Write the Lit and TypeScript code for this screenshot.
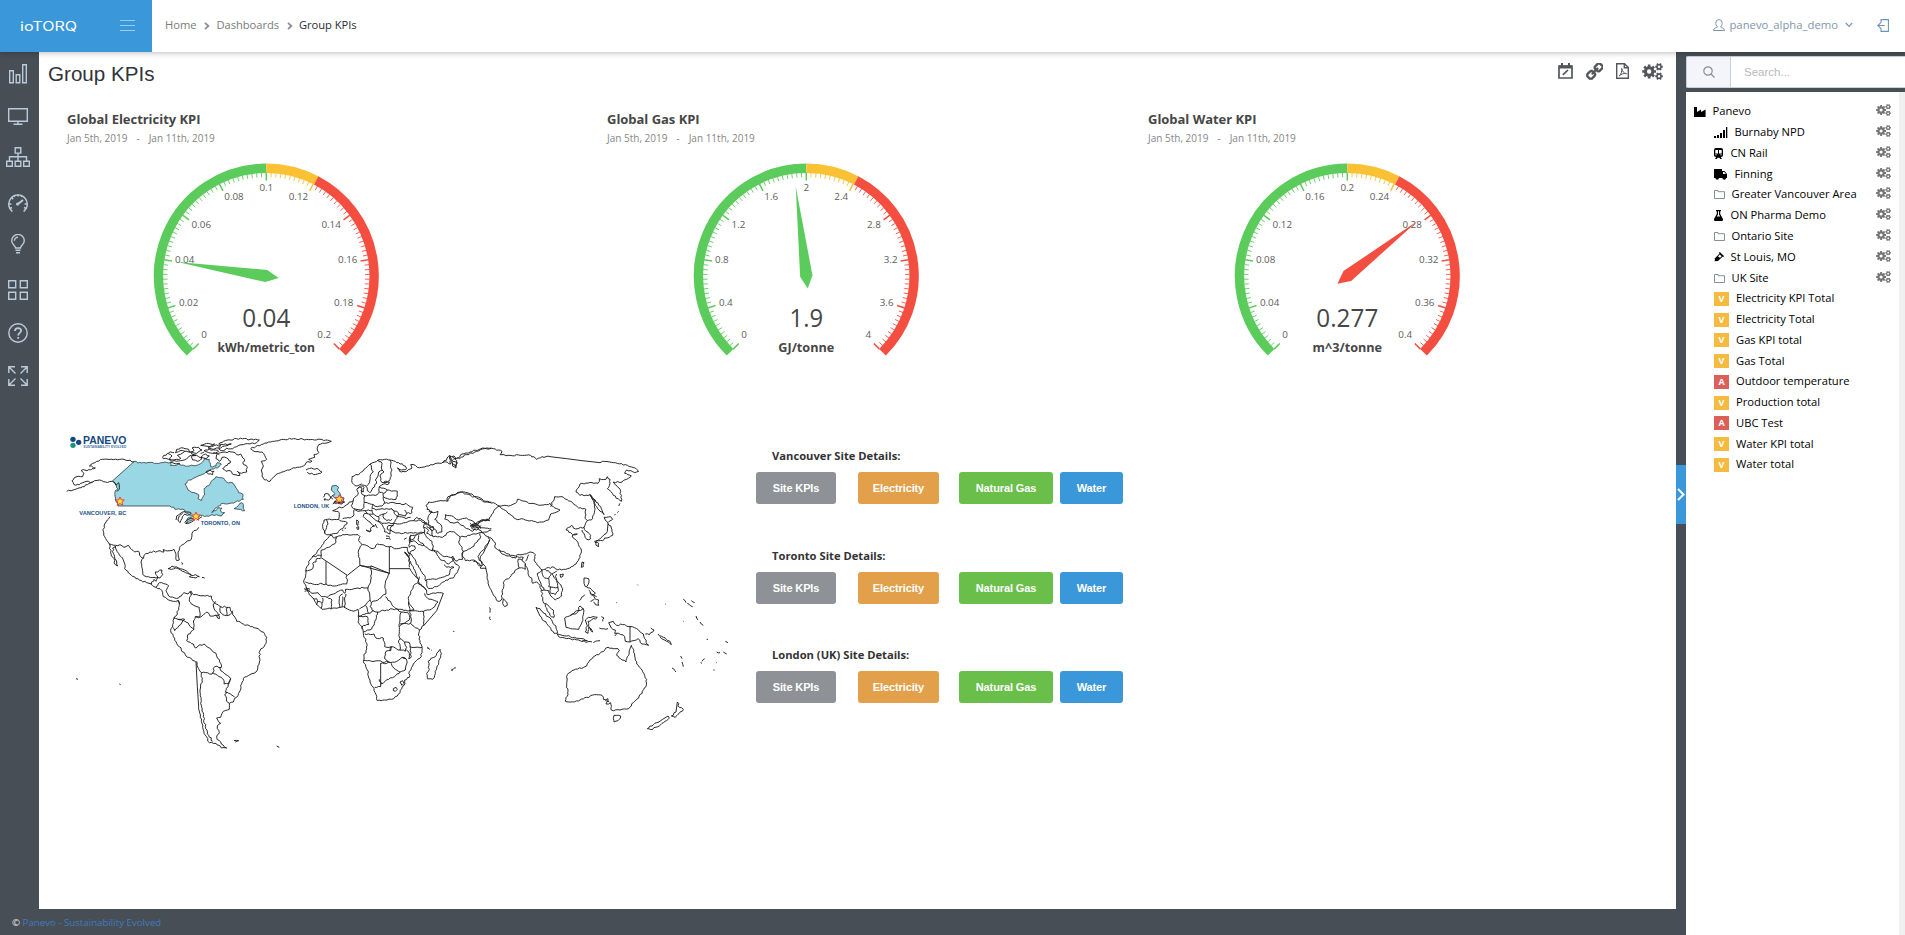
import { LitElement, html, svg, css } from "lit";
import { customElement, property } from "lit/decorators.js";

const f = (n: number) => n.toFixed(2);

function gear(cx: number, cy: number, r: number, inner: number, hole: number, teeth: number) {
  let d = "";
  const step = (Math.PI * 2) / teeth;
  for (let i = 0; i < teeth; i++) {
    const a = i * step;
    const pts: [number, number][] = [
      [a - step * 0.32, inner],
      [a - step * 0.24, r],
      [a + step * 0.24, r],
      [a + step * 0.32, inner],
    ];
    for (const [t, q] of pts) d += `${d ? "L" : "M"}${f(cx + Math.cos(t) * q)} ${f(cy + Math.sin(t) * q)}`;
  }
  return d + `ZM${cx - hole} ${cy}a${hole} ${hole} 0 1 0 ${hole * 2} 0a${hole} ${hole} 0 1 0 ${-hole * 2} 0Z`;
}
const GEARS = gear(6.8, 8, 6.7, 5, 2.1, 8) + gear(16.2, 3.6, 3.7, 2.8, 1.2, 6) + gear(16.2, 12.4, 3.7, 2.8, 1.2, 6);
const cogs = (w: number, h: number) =>
  html`<svg width=${w} height=${h} viewBox="0 0 20 16" preserveAspectRatio="none"><path d=${GEARS} fill="currentColor" fill-rule="evenodd" /></svg>`;

const LINK =
  "M1456 1216q0-40-28-68l-208-208q-28-28-68-28-42 0-72 32 3 3 19 18.5t21.5 21.5 15 19 13 25.5 3.5 27.5q0 40-28 68t-68 28q-15 0-27.5-3.5t-25.5-13-19-15-21.5-21.5-18.5-19q-33 31-33 73 0 40 28 68l206 207q27 27 68 27 40 0 68-26l147-146q28-28 28-67zm-703-705q0-40-28-68l-206-207q-28-28-68-28-39 0-68 27l-147 146q-28 28-28 67 0 40 28 68l208 208q27 27 68 27 42 0 72-31-3-3-19-18.5t-21.5-21.5-15-19-13-25.5-3.5-27.5q0-40 28-68t68-28q15 0 27.5 3.5t25.5 13 19 15 21.5 21.5 18.5 19q33-31 33-73zm895 705q0 120-85 203l-147 146q-83 83-203 83-121 0-204-85l-206-207q-83-83-83-203 0-123 88-209l-88-88q-86 88-208 88-120 0-204-84l-208-208q-84-84-84-204t85-203l147-146q83-83 203-83 121 0 204 85l206 207q83 83 83 203 0 123-88 209l88 88q86-88 208-88 120 0 204 84l208 208q84 84 84 204z";

/* ---------- gauge ---------- */
const GREEN = "#5bcc5b", YELLOW = "#fbc134", RED = "#f44e40";
const LABEL_POS: [number, number][] = [
  [-65, 58.5], [-87.4, 26.7], [-91.4, -16], [-74.7, -51], [-42, -79], [0, -88.3],
  [41.8, -79], [74.5, -51], [91.2, -16], [87.2, 26.7], [64.8, 58.5],
];

@customElement("kpi-gauge")
export class KpiGauge extends LitElement {
  @property({ type: Number }) value = 0;
  @property({ type: Number }) max = 1;
  @property() unit = "";
  @property({ type: Number }) unitWidth = 80;
  @property({ type: Number }) valueWidth = 40;
  static styles = css`
    :host { display: block; }
    svg { display: block; }
    .label { font: 9.8px "Open Sans", sans-serif; fill: #5c5c5c; }
    .value { font: 25.5px "Open Sans", sans-serif; fill: #464646; text-anchor: middle; }
    .unit { font: 700 12.6px "Open Sans", sans-serif; fill: #464646; text-anchor: middle; }
    .start { text-anchor: start; } .middle { text-anchor: middle; } .end { text-anchor: end; }
  `;
  private pt(ratio: number, r: number) {
    const a = ((225 - 270 * ratio) * Math.PI) / 180;
    return [Math.cos(a) * r, -Math.sin(a) * r];
  }
  private band(a: number, b: number, color: string) {
    const [x1, y1] = this.pt(a, 107.8), [x2, y2] = this.pt(b, 107.8);
    return svg`<path d="M${f(x1)} ${f(y1)}A107.8 107.8 0 0 1 ${f(x2)} ${f(y2)}" fill="none" stroke=${color} stroke-width="9.4"/>`;
  }
  render() {
    const color = (t: number) => (t <= 0.5 ? GREEN : t <= 0.6001 ? YELLOW : RED);
    const ticks = [];
    for (let i = 0; i <= 100; i++) {
      const major = i % 10 === 0;
      const [x1, y1] = this.pt(i / 100, 103.4), [x2, y2] = this.pt(i / 100, major ? 95.5 : 98.8);
      ticks.push(svg`<line x1=${f(x1)} y1=${f(y1)} x2=${f(x2)} y2=${f(y2)} stroke=${color(i / 100)} stroke-width=${major ? 1.5 : 0.9}/>`);
    }
    const t = this.value / this.max;
    const a = 225 - 270 * t;
    return html`<svg width="400" height="220" viewBox="-199.3 -125 400 220">
      ${this.band(0, 0.5, GREEN)}${this.band(0.5, 0.602, YELLOW)}${this.band(0.602, 1, RED)}${ticks}
      ${LABEL_POS.map(([x, y], i) => svg`<text class="label ${i < 5 ? "start" : i === 5 ? "middle" : "end"}" x=${x} y=${y + 3.4}>${+((this.max * i) / 10).toFixed(3)}</text>`)}
      <path d="M90 0L0 6.2L-12.5 0L0 -6.2Z" transform="rotate(${-a})" fill=${color(t)} />
      <text class="value" x="0" y="51" textLength=${this.valueWidth} lengthAdjust="spacingAndGlyphs">${this.value}</text>
      <text class="unit" x="0" y="76.3" textLength=${this.unitWidth} lengthAdjust="spacingAndGlyphs">${this.unit}</text>
    </svg>`;
  }
}

/* ---------- world map ---------- */
const CANADA =
  "M252 125L275 129L300 127L320 130L345 126L362 128L362 137L390 134L418 138L446 134L458 126L464 116L478 118L482 140L498 138L502 128L514 132L502 144L480 150L468 156L450 166L432 174L412 184L405 192L414 210L438 220L446 224L444 236L454 242L464 222L462 206L480 192L484 184L498 170L520 174L530 186L548 188L560 206L566 218L578 222L580 238L556 246L540 250L520 250L496 264L486 278L506 262L516 264L512 274L524 278L514 288L500 284L486 284L470 288L452 286L440 292L424 302L408 308L414 294L428 288L410 280L404 270L380 268L360 258L204 258L196 240L196 212L204 206L196 192L186 184Z M552 266L566 256L576 248L580 258L584 272L566 268Z";
const AMERICAS =
  "M252 125L222 118L190 119L158 118L140 124L118 138L136 144L122 150L94 151L102 160L98 170L78 171L66 182L72 194L88 194L108 184L128 186L112 194L98 200L76 208L50 214M128 186L148 180L166 186L186 184M190 184L198 196L206 188L208 208L200 214 M180 290L172 300L164 312L160 334L164 350L178 372L196 376L210 374L222 382L234 376L244 388L254 396L266 394L272 410L282 414M178 372L182 398L184 408L194 422L196 434L203 438L198 420L190 400L188 384L196 378L206 400L222 426L224 446L244 466L268 480L290 488L304 492L312 478L318 484L322 468L316 456L336 450L338 464L330 474L312 472L290 470L278 462L275 440L276 418L282 406L300 396L322 394L330 392L342 396L340 388L360 392L372 388L378 406L380 422L388 420L384 396L390 380L408 366L424 358L426 348L428 336L446 322 M302 492L318 502L330 506L338 518L340 530L356 540L370 544L384 542L388 550M318 500L328 488L346 492L356 498L348 512L356 528L374 534L386 534L394 528L402 518L414 522L424 514L430 524L446 526L466 528L484 528L488 542L504 554L512 560L540 562L548 584L560 604L580 612L602 620L618 624L640 636L650 652L648 670L630 692L628 726L618 756L600 764L580 776L572 796L568 816L550 846L538 850L530 844L524 824L530 816L542 822L554 832M538 850L538 868L520 874L512 892L500 894L512 910L502 918L508 938L500 952L514 972L530 984L514 984L498 970L478 968L462 940L454 904L446 860L442 800L438 726L408 708L388 680L370 650L362 632L368 614L372 596L382 582L388 550M384 540L388 552M424 520L418 538L424 552L448 562L450 578L446 594L436 590L430 606L432 628L412 648L410 662L430 672L436 684L444 678L462 672L478 684L498 700L512 730L514 742L494 740L486 762L454 758L446 746L440 724M486 758L518 776L522 792L536 792L542 776L528 764L512 752L510 742M542 776L534 800L526 818M454 758L456 780L450 810L452 850L460 890L466 920L476 946L488 964M436 590L450 592L466 580L470 576L480 588L496 586L508 596L504 580L494 570L490 552L496 544M512 560L510 576L524 586L540 584L548 572M532 562L530 586M496 586L510 584M370 594L384 598L404 598L392 614L374 632L368 622M384 598L408 606L432 628M420 514L426 524M354 446L366 438L386 444L404 450L424 464L412 460L392 450L376 444L364 448ZM418 470L436 464L448 470L438 474L424 472ZM456 472L464 474M394 428L398 430L396 434M552 962L566 962L556 966M680 978L688 982M78 776L84 778M208 792L212 794 M378 300L380 288L394 278L410 276L424 280L412 286L404 282L396 296L390 308L384 300L388 288L398 280M404 308L420 296L434 300L420 308L406 310M440 300L456 290";
const ARCTIC =
  "M338 112L352 100L366 108L358 118L372 120L392 116L382 106L396 100L404 94L390 92L376 98L380 88L400 84L416 88L418 96L432 92L426 84L446 82L456 90L440 100L424 100L438 106L418 108L410 116L392 122L366 124L356 118L340 116ZM424 110L440 106L456 116L442 124L428 120ZM356 98L372 98M462 92L478 88L496 90L506 94L492 100L476 98ZM474 84L494 76L512 76L506 84L490 88ZM452 76L470 70L494 72L480 80ZM506 72L526 62L560 56L600 58L628 60L620 68L600 72L580 74L560 80L548 86L530 84L520 92L506 86L524 78L544 72L520 74ZM500 104L512 98L526 96L548 96L560 104L572 102L584 118L578 128L592 142L590 156L574 160L562 154L570 166L552 164L540 152L528 154L518 146L532 136L542 124L530 114L516 112L508 124L498 116ZM468 156L480 150L492 154L488 164L476 162ZM452 112L466 102L478 108L470 116ZM490 98L508 104M360 126L372 130L390 130M402 94L428 96M462 96L452 100";
const GREENLAND =
  "M602 86L634 74L656 66L690 60L730 56L770 58L810 58L844 64L824 70L806 74L802 90L806 98L792 104L794 112L776 118L786 124L768 128L760 138L736 144L712 150L696 156L680 162L668 174L660 184L644 180L636 168L634 150L640 138L634 124L650 118L644 106L636 96L612 94ZM768 150L784 144L806 148L816 156L802 162L780 162L772 156";
const AFRICA =
  "M120 286L136 294L158 284L190 284L204 284L210 290L206 302L218 314L234 318L246 326L256 322L262 312L276 314L298 320L320 326L338 322L352 322L358 342L354 336M120 286L108 300L96 316L84 330L76 344L60 360L48 386L48 400L44 416L42 430L50 444L56 458L68 474L80 494L96 508L112 506L134 504L160 500L178 510L196 512L204 508L206 522L206 536L204 546L218 566L220 580L230 610L228 632L222 650L220 664L232 690L240 720L252 752L262 782L284 780L304 778L322 768L342 736L344 720L358 712L358 694L370 672L394 650L396 620L390 602L386 580L388 570L402 556L440 512L460 460L436 460L412 464L410 452L388 430L376 396L362 366L344 336L350 342L356 350L358 382 M298 320L298 400L210 376L206 350L206 330L216 314M298 386L360 386L368 400L384 416M138 288L138 306L116 322L94 330L92 352L172 406L210 376L222 378L244 378L298 400M94 346L66 350M92 356L80 356L78 366L68 370L68 386L46 392M108 364L108 432L68 432L46 426M108 432L128 438L170 432L170 406M244 378L242 420L234 444L204 444L166 448L164 460L158 450L130 462L112 472L94 470L84 458L66 460L46 444M298 400L286 430L288 462L268 476L244 488L240 480L234 444M286 470L304 490L318 506L360 512L372 510L356 486L356 470L370 438L384 428L396 438L410 452M318 506L290 510L262 516L250 512L236 520L206 528M236 520L226 496L208 508M240 480L226 496M244 488L240 500L250 514M206 530L232 530L236 554L220 556L216 568M262 516L258 538L252 556L240 570L220 576M224 582L252 582L258 594L280 594L284 620L304 620L324 630L330 630L326 602L330 596L328 580L328 562L330 540L334 516L318 506M304 620L302 632L288 634L284 656L296 666L320 664L336 652L348 656L350 672L346 690L330 696L316 688L304 670M220 662L252 664L296 666M272 670L272 740L254 742M272 670L302 668M268 718L274 732L296 718L318 706L330 696M304 620L300 632M330 596L344 606L358 608L360 620L396 622M344 606L350 622L346 634L330 630M360 620L364 650L356 656L358 640L348 628M348 656L336 652M388 570L362 550L330 552M362 550L362 530L360 512L400 514L402 542L402 556M400 514L424 508L444 486L412 474L404 460M384 428L388 410M356 486L360 512M334 516L356 520L358 540L336 552L328 560M124 506L126 480L112 472M150 502L148 470L158 462M156 500L158 470M164 504L164 480L168 462M94 504L96 490L84 484L80 494M68 474L80 476L82 486M42 446L60 448M44 454L60 454M96 490L98 474M310 746L318 742L322 748L316 754L310 752ZM330 726L338 722L342 730L336 736ZM450 628L454 640L446 668L436 700L428 718L412 716L410 700L418 688L414 664L424 654L436 650L444 636ZM412 622L416 624M424 630L426 632M484 690L488 692M490 574L492 574M496 684L498 684";
const EUROPE =
  "M118 284L104 280L98 260L102 240L112 238L146 238L148 224L144 214L128 212L144 204L160 202L170 194L178 186L190 182L194 172L204 164L200 148L208 140L216 144L214 158L222 166L242 166L262 164L268 156L268 140L280 132L296 132L298 126L288 128L276 128L272 122L270 108L282 96L276 90L266 96L264 108L256 120L260 130L248 144L240 158L232 152L228 138L214 132L198 138L186 128L186 110L210 100L222 88L240 72L264 60L284 58L300 60L326 68L346 78L350 86L334 90L322 84L334 96L350 94L366 84L362 74L376 76L382 82L410 78L422 74L454 70L460 66L482 72L478 50L492 48L500 62L496 80L486 66M486 50L498 58L530 44L560 34L584 26L604 24 M240 72L244 84L250 96L242 104L240 120L230 138M264 60L276 70L276 90M300 60L302 74L306 90L304 108L298 122L282 126M268 140L292 150L322 154L322 168L318 178L298 178L280 170L280 160L268 158M280 160L292 150M280 170L284 186L276 198L262 200L250 194L222 188L224 168M190 182L184 196L190 206L212 210L222 202L222 190M250 194L246 206L258 210L276 206M284 190L312 188L336 194L348 190L368 202L366 218L350 220L346 228L326 224L320 214L304 206L290 206L276 206M304 206L316 224L328 230L348 236L362 232M326 224L316 240L310 256M310 250L322 252L346 248L370 242L386 240L404 248L400 262L404 276L376 278L340 280L312 276L300 266L310 256L296 256L292 268L302 270L300 282L284 276L280 262L272 250L254 238L236 222L224 220L220 230L240 246L254 258L246 260L240 276L228 270L244 272M262 264L256 252M192 224L180 234L158 236M146 238L160 244L172 248L156 266L142 280L118 284M110 240L114 252L108 268L104 280M192 224L192 210M192 206L204 214L224 212L232 222M224 212L246 210L250 222L238 222M250 222L266 230L280 222L292 216M266 230L264 244L276 250L290 250L310 250M280 222L282 236L290 242L306 238M200 240L206 244L204 256L200 254ZM200 262L206 260L206 268L202 268ZM288 288L300 292M288 296L302 298M342 298L350 294M202 146L212 138L222 142L220 156L212 152M370 242L380 232L396 240L412 250L404 250L430 260L432 268L426 272L410 260M350 220L344 210M402 262L416 272L410 280L430 290L448 290L458 292M164 266L168 264M156 270L160 272M100 172L104 162L116 162L122 170L116 180L102 180L106 174M128 178L124 172L130 164M128 192L134 184L150 188L164 186L156 192L136 190";
const ASIA_W =
  "M359 342L366 332L376 326L374 318L364 316L358 322L358 298L362 286L380 284L404 276M358 300L372 296L380 284M386 286L384 300L402 316L426 332L440 338L452 360L464 362L476 372L490 362L488 356L496 372L508 380L500 400L490 414L468 420L440 440L416 446L410 436L408 420L416 418L440 418L464 410L478 404L480 390L492 382L470 382L462 374M402 276L410 292L426 304L430 318L426 332M362 286L360 306L372 302L386 314L402 316M344 336L356 350L360 340L378 366L392 392L406 412L408 424 M412 210L408 196L416 186L440 184L472 184L474 170L490 164L512 156L530 162L560 174L578 184L604 186M430 290L426 276L416 256L414 232L426 214L412 208M416 214L430 218L444 214L442 226L434 238L448 250L456 262L456 276L444 280L434 268L420 262M464 238L466 224L490 230L506 240L530 234L552 246L560 256L568 244L582 240L600 242M466 238L486 248L504 246L530 266L548 274L556 266L540 258L558 250L570 262L604 266M458 292L480 274L496 278L510 292L506 306L520 334L518 358L496 362L488 354L464 350L444 334L426 326M510 292L540 286L564 280L584 276L604 270M520 334L540 326L552 318L564 300L572 290L570 280M520 334L516 346L526 362L556 362L568 378L578 376L564 350L584 326L598 300M484 354L488 348L494 356M548 256L562 262L574 256M544 264L560 270L568 264M540 250L552 262";
const ASIA_E =
  "M130 128L150 106L158 124L172 128L168 144L158 138L150 110M160 118L180 110L186 102L210 96L248 84L280 86L306 94L300 104L330 106L362 106L392 106L410 118L426 110L450 110L500 116L546 122L600 128L608 124L640 128L676 134L706 144L716 154L704 158L680 150L674 160L694 168L680 178L666 186L640 186L642 190L652 200L662 214L664 244L640 226L622 206L630 190L630 178L622 170L618 178L598 176L594 190L576 188L540 192L528 216L540 226L570 224L584 244L584 272L574 300L562 302L552 322L542 322L534 326L520 324L514 316L498 330L512 338L518 344L532 342L516 348L534 368L544 390L540 412L528 432L510 444L490 448L474 450M570 224L586 240L604 266L612 284L600 274L584 250ZM612 292L632 290L638 298L624 308L616 300ZM624 310L634 324L638 346L628 352L614 354L608 362L590 362L586 368L596 370L596 380L588 376L584 364L602 354L612 344L622 334ZM656 258L660 250M652 278L656 274M646 282L644 286 M144 244L150 228L184 216L210 222L230 230L256 244L280 248L298 258L284 268L274 284L268 298L240 306L226 314M298 258L326 258L346 250L352 238L386 250L412 254L440 254L450 250L460 260L480 270L470 276L452 282L446 300L430 306L412 308L376 300L346 296L324 280L310 268L298 258M452 260L464 230L486 230L512 244L536 264L558 268L556 296L562 302M552 322L558 334L572 346L572 356L560 358L552 340L546 330 M232 320L246 338L268 352L284 366L286 384L304 394L326 402L346 408L352 404L374 402L390 396L406 404L402 420L412 436L426 450L440 444L462 442L474 450M298 388L302 398L324 408L348 414L350 408M352 410L370 412L366 420L354 418L358 444L350 448L334 466L310 488L308 522L304 540L294 544L276 516L262 478L258 446L240 444L244 440L232 428L220 424M258 446L240 420L246 404L262 376L270 358L264 350M358 444L376 448L376 430L366 420M376 432L384 460L396 480L398 490L410 486L420 496L424 508L428 540L436 560L454 590L462 592L460 570L446 558L434 550M376 424L386 404M412 460L426 450L430 470L446 476L454 460L436 448M412 460L420 484L432 510L424 512M446 476L446 500L460 502L474 502L466 476L456 462L470 454M432 510L446 512L452 528L466 540L484 528L488 506L474 486L466 470L470 462M452 500L450 518L466 524L476 512L474 502M480 464L490 462L488 470L482 472ZM546 426L552 428L550 440L544 442ZM310 536L320 546L322 556L314 560L308 550ZM552 474L566 476L564 494L556 500L552 490ZM560 502L574 508L586 520L576 526L566 510M570 518L584 534M576 524L590 530M572 546L584 536L596 540L596 556L586 554L580 546M538 542L554 524M408 562L420 566L444 590L468 618L472 640L462 640L444 616L420 588ZM472 642L500 648L524 652L546 656L562 662L540 662L500 656L476 650ZM494 594L508 588L530 580L540 558L552 570L548 590L546 606L536 628L512 626L498 622ZM512 584L530 572L552 566M556 600L566 592L592 592L574 600L564 604L566 618L578 636L566 622L564 640L556 636L562 618ZM604 590L612 594L608 604M598 624L624 626M580 668L600 662M546 664L576 666M626 608L640 604L650 616L668 614L690 620L710 626L730 642L734 656L746 676L726 672L714 656L690 666L676 664L674 650L656 640L644 640L646 630L634 624ZM690 618L690 666M736 642L748 644L762 630L752 624M774 642L790 652L812 668L814 674L800 664L780 650M644 648L650 640M596 704L614 690L624 682L654 686L658 692L650 706L666 720L678 726L686 706L694 676L704 702L710 732L726 750L740 778L738 800L716 834L700 848L686 866L660 870L634 870L632 848L618 852L624 836L610 838L606 826L590 824L560 832L540 840L512 846L496 844L504 824L500 790L502 764L522 750L560 738L570 720L590 704ZM616 842L628 846M642 886L662 888L654 902L642 906L640 896ZM832 846L838 862L850 868L838 880L826 892L814 888L828 876ZM804 888L808 894L786 910L758 928L742 926L764 910L788 898ZM816 744L828 756M842 708L846 716M846 726L850 740M906 724L914 716M902 728L906 730M850 538L858 548M862 550L878 560M874 542L884 548M888 588L894 600M900 606L910 616M920 658L924 658M976 664L984 668M950 696L960 698M970 696L980 702M268 562L270 578M270 590L272 600M162 634L162 636M82 684L90 688M154 750L166 742M712 494L714 496M796 552L798 554M648 548L650 548M940 750L944 750M948 728L950 728M850 604L852 604M214 316L230 308L244 300L266 300M214 322L236 316L242 326M218 312L232 326";
const UK = "M124 150L126 138L138 136L146 142L142 150L150 160L154 172L162 174L158 188L140 188L132 190L140 178L130 170L134 160Z";
const STAR = "M0 -13L3.8 -4.4L13 -4L6 2.4L8.4 12L0 6.6L-8.4 12L-6 2.4L-13 -4L-3.8 -4.4Z";

/** Breaks each segment of a coastline into short, slightly irregular steps. */
function rough(d: string) {
  let seed = 7;
  const rnd = () => ((seed = (seed * 16807) % 2147483647) / 2147483647 - 0.5);
  let px = 0, py = 0, out = "";
  for (const m of d.matchAll(/([MLZ])\s*(?:([\d.]+) ([\d.]+))?/g)) {
    if (m[1] === "Z") { out += "Z"; continue; }
    const x = +m[2], y = +m[3];
    if (m[1] === "L") {
      const dx = x - px, dy = y - py, len = Math.hypot(dx, dy);
      const straight = len > 45;
      const n = straight ? 1 : Math.max(1, Math.round(len / 6));
      for (let i = 1; i < n; i++) {
        const k = rnd() * 4.8;
        out += `L${f(px + (dx * i) / n - (dy / len) * k)} ${f(py + (dy * i) / n + (dx / len) * k)}`;
      }
    }
    out += `${m[1]}${x} ${y}`;
    px = x; py = y;
  }
  return out;
}

@customElement("world-map")
export class WorldMap extends LitElement {
  static styles = css`
    :host { display: block; }
    svg { display: block; }
    .line { fill: none; stroke: #1a1a1a; stroke-width: 2.8; stroke-linejoin: round; }
    .fill { fill: #9ad7e5; stroke: #22343c; stroke-width: 2.3; stroke-linejoin: round; }
    .star { fill: #ffe135; stroke: #ee4036; stroke-width: 3; }
    .city { font: bold 16.6px "Liberation Sans", sans-serif; fill: #1c4f88; }
    .brand { font: bold 31px "Liberation Sans", sans-serif; fill: #15497e; }
    .tag { font: bold 8.6px "Liberation Sans", sans-serif; fill: #4470a0; }
  `;
  render() {
    return html`<svg width="690" height="340" viewBox="0 0 2070 1020">
      <path class="fill" d=${rough(CANADA)} />
      <g class="line"><path d=${rough(AMERICAS)} /><path d=${rough(ARCTIC)} /><path d=${rough(GREENLAND)} /></g>
      <g transform="translate(720 60)">
        <path class="fill" d=${UK} />
        <g class="line"><path d=${rough(AFRICA)} /><path d=${rough(EUROPE)} /><path d=${rough(ASIA_W)} /></g>
      </g>
      <path class="line" transform="translate(1050 0)" d=${rough(ASIA_E)} />
      <path class="star" d=${STAR} transform="translate(210 244)" />
      <path class="star" d=${STAR} transform="translate(438 289)" />
      <path class="star" d=${STAR} transform="translate(868 237)" />
      <text class="city" x="88" y="284" textLength="141" lengthAdjust="spacingAndGlyphs">VANCOUVER, BC</text>
      <text class="city" x="452" y="315" textLength="118" lengthAdjust="spacingAndGlyphs">TORONTO, ON</text>
      <text class="city" x="731" y="263" textLength="107" lengthAdjust="spacingAndGlyphs">LONDON, UK</text>
      <circle cx="69" cy="58" r="8" fill="#15497e" /><circle cx="86" cy="67" r="8" fill="#15497e" /><circle cx="69" cy="76" r="8" fill="#1d9080" />
      <text class="brand" x="99" y="73" textLength="130" lengthAdjust="spacingAndGlyphs">PANEVO</text>
      <text class="tag" x="100" y="83" textLength="129" lengthAdjust="spacingAndGlyphs">SUSTAINABILITY EVOLVED</text>
    </svg>`;
  }
}

/* ---------- navigation data ---------- */
const s = (body: unknown, w = 22, h = 22) =>
  html`<svg width=${w} height=${h} viewBox="0 0 ${w} ${h}" fill="none" stroke="#b9cbdb" stroke-width="1.4">${body}</svg>`;
const NAV = [
  { h: 43, icon: s(svg`<path d="M1.700 6.700h3.600v12H1.700zM8.200 10.700h3.600v8H8.200zM14.700 .7h3.600v18h-3.600z"/>`, 20, 20) },
  { h: 43, icon: s(svg`<path d="M.7.7h18.600v12.600H.7zM10 13.300v3M5.500 16.300h9"/>`, 20, 17) },
  { h: 37, icon: s(svg`<path d="M9.200.7h5.600v5.400H9.200zM.7 14.200h5.600v5H.7zM9.200 14.200h5.600v5H9.200zM17.700 14.200h5.600v5h-5.600zM12 6v8M3.500 14v-4.200h17V14"/>`, 24, 20) },
  { h: 55, icon: s(svg`<path d="M4.400 18.600A9.300 9.300 0 1 1 15.600 18.600M10 1v2.600M3.500 4.500l1.800 1.800M.8 11h2.600M19.200 11h-2.600M2 15.500l2-1M18 15.500l-2-1M6 2l.8 2M14 2l-.8 2"/><path d="M10 11l5-4" stroke-width="2"/><circle cx="9.600" cy="11" r="1.600" fill="#b9cbdb" stroke="none"/>`, 20, 20) },
  { h: 28, icon: s(svg`<path d="M4.500 14c0-2.200-3.800-3.600-3.800-7.300a6.300 6.300 0 0 1 12.600 0c0 3.700-3.800 5.100-3.800 7.300zM4.500 16.300h5M5 18.700h4M3.400 6.800A3.600 3.600 0 0 1 7 3.200"/>`, 14, 20) },
  { h: 64, icon: s(svg`<path d="M.7.7h7v7h-7zM12.300.7h7v7h-7zM.7 12.300h7v7h-7zM12.300 12.300h7v7h-7z"/>`, 20, 20) },
  { h: 22, icon: s(svg`<circle cx="10" cy="10" r="9.200"/><path stroke-width="1.800" d="M7 8c0-3.800 6.200-3.800 6.200-.4 0 2.400-3 2.200-3 4.800M10.200 14v1.800"/>`, 20, 20) },
  { h: 64, icon: s(svg`<path d="M.8 7V.8H7M1 1l6.500 6.500M13 .8h6.200V7M19 1l-6.500 6.500M.8 13v6.200H7M1 19l6.500-6.500M19.200 13v6.200H13M19 19l-6.500-6.500"/>`, 20, 20) },
];

const ti = (w: number, h: number, body: unknown) => html`<svg width=${w} height=${h} viewBox="0 0 ${w} ${h}">${body}</svg>`;
const ICONS: Record<string, unknown> = {
  factory: ti(12, 10, svg`<path d="M0 0h3v5l4-2.600V5l4.600-2.600V10H0z"/>`),
  signal: ti(14, 11, svg`<path d="M0 9h2v2H0zM3 8h2v3H3zM6 6h2v5H6zM9 3h2v8H9zM12 0h1.300v11H12z"/>`),
  train: ti(9, 11, svg`<rect x="0" y="0" width="9" height="9" rx="2"/><path d="M2.500 8.500L1 11h1.800l.8-1.300h1.800l.8 1.300H8L6.500 8.500z"/><path d="M1.300 2h2.700v3.500H1.300zM5 2h2.700v3.500H5z" fill="#fff"/><path d="M1.400 6.800h1.200M6.400 6.800h1.200" stroke="#fff"/>`),
  truck: ti(13, 11, svg`<path fill-rule="evenodd" d="M0 0h8v2h2.500L13 5v4h-1a1.800 1.800 0 0 1-3.600 0H5a1.800 1.800 0 0 1-3.600 0H0zM9 3v2h3l-1.800-2z"/>`),
  folder: ti(11, 9, svg`<path d="M.5 8.500v-8h3.500v1.200h6.500v6.800z" fill="none" stroke="#8a8f96"/>`),
  flask: ti(9, 11, svg`<path fill-rule="evenodd" d="M2 0h5v1.200h-.8V4L9 9q.4 2-1.400 2H1.400Q-.4 11 0 9l2.800-5V1.200H2zM4 1.200V4.600L2.800 6.500h3.400L5 4.600V1.200z"/>`),
  eraser: ti(10, 10, svg`<path d="M.7 9.300L1 6.300L5.800 1.300L9 4.200L4 9z"/><path d="M5.300 .6L9.600 4.600" stroke="#000" stroke-width="1.300"/><path d="M5.800 2.600L7.700 4.300L6 5.800L4 4.400z" fill="#fff"/>`),
};
interface Node { icon: string; text: string; tx: number; root?: boolean }
const TREE: Node[] = [
  { icon: "factory", text: "Panevo", tx: 19, root: true },
  { icon: "signal", text: "Burnaby NPD", tx: 20 },
  { icon: "train", text: "CN Rail", tx: 17 },
  { icon: "truck", text: "Finning", tx: 20 },
  { icon: "folder", text: "Greater Vancouver Area", tx: 18 },
  { icon: "flask", text: "ON Pharma Demo", tx: 17 },
  { icon: "folder", text: "Ontario Site", tx: 18 },
  { icon: "eraser", text: "St Louis, MO", tx: 17 },
  { icon: "folder", text: "UK Site", tx: 18 },
  ...["Electricity KPI Total", "Electricity Total", "Gas KPI total", "Gas Total"].map((text) => ({ icon: "V", text, tx: 22 })),
  { icon: "A", text: "Outdoor temperature", tx: 22 },
  { icon: "V", text: "Production total", tx: 22 },
  { icon: "A", text: "UBC Test", tx: 22 },
  { icon: "V", text: "Water KPI total", tx: 22 },
  { icon: "V", text: "Water total", tx: 22 },
];
const KPIS = [
  { title: "Global Electricity KPI", value: 0.04, max: 0.2, unit: "kWh/metric_ton", uw: 97.5, vw: 48 },
  { title: "Global Gas KPI", value: 1.9, max: 4, unit: "GJ/tonne", uw: 56, vw: 33.5 },
  { title: "Global Water KPI", value: 0.277, max: 0.4, unit: "m^3/tonne", uw: 69.5, vw: 62 },
];
const SITES = ["Vancouver", "Toronto", "London (UK)"];

@customElement("app-root")
export class AppRoot extends LitElement {
  static styles = css`
    :host { display: flex; flex-direction: column; width: 1905px; height: 935px; overflow: hidden; background: #474e56;
      font-family: "Open Sans", sans-serif; font-size: 12px; color: #333; }
    * { box-sizing: border-box; }
    svg { display: block; flex: none; }
    header { height: 52px; flex: none; display: flex; align-items: center; background: #fff; box-shadow: 0 1px 6px rgba(0,0,0,.25); position: relative; z-index: 1; }
    .brand { width: 152px; height: 52px; background: #3a97d9; display: flex; align-items: center; padding-left: 18px; gap: 41px; }
    .brand text { font: 12.5px "Inter", sans-serif; fill: #fff; }
    .crumbs { display: flex; align-items: center; padding-left: 13px; flex: 1; color: #7b7b7b; font-size: 11.2px; padding-bottom: 3px; letter-spacing: -.05px; }
    .crumbs svg { margin: 2px 6.500px 0 7.500px; }
    .crumbs b { font-weight: 400; color: #2b2b33; }
    .user { display: flex; align-items: center; color: #7f96a9; font-size: 11.3px; padding: 0 16px 2px 0; }
    .user span { margin: 0 7px 1px 4px; }
    .user .out { margin-left: 24px; }
    .body { flex: 1; display: grid; grid-template-columns: 39px 1637px 10px 219px; min-height: 0; }
    nav { display: flex; flex-direction: column; }
    .nav-item { display: flex; flex: none; justify-content: center; align-items: center; padding-right: 4px; }
    .left { grid-column: 1 / 3; display: grid; grid-template: 857px 26px / 39px 1637px; }
    main { background: #fff; overflow: hidden; }
    .title { height: 44px; display: flex; align-items: center; justify-content: space-between; padding: 0 13px 0 9px; }
    h1 { margin: 0; font: 20.6px "Liberation Sans", sans-serif; color: #2f353b; }
    .tools { display: flex; align-items: center; gap: 13px; color: #53565a; padding-bottom: 6px; }
    .cards { display: flex; height: 324px; padding-left: 28px; }
    .card { width: 541px; flex: none; padding-top: 14px; }
    .card:first-child { width: 540px; }
    h3 { margin: 0; font: 700 13px/18px "Open Sans", sans-serif; color: #464646; letter-spacing: -.03px; }
    .dates { display: flex; gap: 9px; height: 23px; padding-top: 1px; font-size: 10px; line-height: 18px; color: #868686; }
    .lower { display: flex; padding-left: 11px; }
    .sites { padding: 27px 0 0 16px; }
    .site { height: 99.500px; }
    .site h4 { margin: 0 0 7px 16px; font: 700 11.200px/18px "Open Sans", sans-serif; color: #333; }
    .btns { display: grid; grid-template-columns: 102px 101px 101px 63px; }
    .btn { height: 32px; border-radius: 3px; color: #fff; font: bold 11px/32px "Liberation Sans", sans-serif; letter-spacing: -.12px; text-align: center; }
    .grey { background: #8e9297; width: 80px; } .orange { background: #e3a04a; width: 81px; }
    .green { background: #6abf4b; width: 94px; } .blue { background: #3a97d9; width: 63px; }
    footer { grid-column: 1 / 3; padding: 0 0 0 12px; font-size: 9.700px; line-height: 27px; color: #3f7cbf; }
    footer span { color: #e8e8e8; }
    .strip { padding-top: 413px; }
    .handle { height: 59px; background: #3a97d9; display: flex; align-items: center; justify-content: center; }
    aside { display: flex; flex-direction: column; padding-top: 4px; gap: 4px; }
    .search { display: flex; height: 32px; background: #fff; border: 1px solid #c9d0d8; border-right: 0; border-radius: 2px 0 0 2px; font: 11.500px/30px "Liberation Sans", sans-serif; color: #b5b9be; }
    .search .mag { width: 44px; background: #f3f5fa; border-right: 1px solid #c9d0d8; display: flex; align-items: center; justify-content: center; margin-right: 13px; }
    .panel { flex: 1; display: flex; background: #fff; }
    .tree { flex: 1; padding-top: 9px; color: #000; font-size: 11.200px; }
    .scroll { width: 6px; background: #f0f0f0; }
    .row { height: 20.770px; display: grid; grid-template-columns: auto 1fr 23px; align-items: center; padding-left: 28px; }
    .row.root { padding-left: 8px; }
    .row .txt { white-space: nowrap; line-height: 16px; }
    .row .cog { color: #757575; padding-bottom: 2px; }
    .badge { width: 15px; height: 14px; color: #fff; font: 700 9px/13px "Open Sans", sans-serif; text-align: center; background: #f5bb41; margin-top: 1px; }
    .badge.A { background: #dd5f5a; }
    .w17 { width: 16.500px; } .w18 { width: 17.500px; } .w19 { width: 18.500px; } .w20 { width: 20.500px; } .w22 { width: 22px; }
    .icon:not(.w22) { padding-top: 1px; }
  `;
  render() {
    const chev = html`<svg width="6" height="8" viewBox="0 0 6 8"><path d="M1 .8L4.400 4L1 7.200" fill="none" stroke="#8f8f8f" stroke-width="1.800"/></svg>`;
    return html`
      <header>
        <div class="brand">
          <svg width="61" height="24" viewBox="0 0 61 24"><text x="2" y="16.500" textLength="57" lengthAdjust="spacingAndGlyphs">ioTORQ</text></svg>
          <svg width="15" height="14" viewBox="0 0 15 14"><path d="M0 1.500h15M0 6.500h15M0 11.500h15" stroke="#9ccbec"/></svg>
        </div>
        <div class="crumbs"><span>Home</span>${chev}<span>Dashboards</span>${chev}<b>Group KPIs</b></div>
        <div class="user">
          <svg width="12" height="12" viewBox="0 0 12 12" fill="none" stroke="#7f96a9"><path d="M4.500 8C3 6.500 2.800 5 2.800 3.800a3.200 3.200 0 0 1 6.400 0C9.200 5 9 6.500 7.500 8c0 .8 4 .6 4 3.500H.5C.5 8.600 4.500 8.800 4.500 8z"/></svg>
          <span>panevo_alpha_demo</span>
          <svg width="8" height="6" viewBox="0 0 8 6"><path d="M.8 1L4 4.400L7.200 1" fill="none" stroke="#7f96a9" stroke-width="1.300"/></svg>
          <svg class="out" width="12" height="13" viewBox="0 0 12 13" fill="none" stroke="#6c94b8" stroke-width="1.100"><path d="M4 4V.6h7.400v11.800H4V9M.8 6.500h7M3.600 3.800L.8 6.500l2.800 2.700"/></svg>
        </div>
      </header>
      <div class="body">
        <div class="left">
          <nav>${NAV.map((n) => html`<div class="nav-item" style="height:${n.h}px">${n.icon}</div>`)}</nav>
          <main>
            <div class="title">
              <h1>Group KPIs</h1>
              <div class="tools">
                <svg width="15" height="16" viewBox="0 0 15 16" fill="none" stroke="currentColor"><path d="M1 3h13v12H1z" stroke-width="1.700"/><path d="M1 4h13" stroke-width="3"/><path d="M4 0v3M11 0v3" stroke-width="2"/><path d="M4.800 11.800L10 7" stroke-width="1.700"/></svg>
                <svg width="17" height="17" viewBox="80 80 1580 1580"><path d=${LINK} transform="translate(1740 0) scale(-1 1)" fill="currentColor" stroke="currentColor" stroke-width="40"/></svg>
                <svg width="13" height="16" viewBox="0 0 13 16" fill="none" stroke="currentColor" stroke-width="1.400"><path d="M.7.7h7.800L12.300 4.500v10.800H.7zM8.300.7v4h4"/><path stroke-width="1" d="M5.700 5.500c1 3 1.500 4.500 4.800 5.200-3-.5-5 .2-7.500 2.300 2-1.500 3.200-4.500 2.700-7.500z"/></svg>
                ${cogs(21, 17)}
              </div>
            </div>
            <div class="cards">
              ${KPIS.map((k) => html`<section class="card">
                <h3>${k.title}</h3>
                <div class="dates"><span>Jan 5th, 2019</span><span>-</span><span>Jan 11th, 2019</span></div>
                <kpi-gauge .value=${k.value} .max=${k.max} .unit=${k.unit} .unitWidth=${k.uw} .valueWidth=${k.vw}></kpi-gauge>
              </section>`)}
            </div>
            <div class="lower">
              <world-map></world-map>
              <div class="sites">
                ${SITES.map((n) => html`<div class="site"><h4>${n} Site Details:</h4>
                  <div class="btns"><div class="btn grey">Site KPIs</div><div class="btn orange">Electricity</div><div class="btn green">Natural Gas</div><div class="btn blue">Water</div></div>
                </div>`)}
              </div>
            </div>
          </main>
          <footer><span>©</span> Panevo - Sustainability Evolved</footer>
        </div>
        <div class="strip"><div class="handle"><svg width="8" height="13" viewBox="0 0 8 13"><path d="M1 1l5.500 5.500L1 12" fill="none" stroke="#fff" stroke-width="2"/></svg></div></div>
        <aside>
          <div class="search"><div class="mag"><svg width="12" height="12" viewBox="0 0 12 12" fill="none" stroke="#8a8f96" stroke-width="1.200"><circle cx="5" cy="5" r="4.200"/><path d="M8 8l3.500 3.500"/></svg></div>Search...</div>
          <div class="panel">
            <div class="tree">
              ${TREE.map((n, i) => html`<div class="row ${n.root ? "root" : ""}">
                <div class="icon w${n.tx}">${ICONS[n.icon] ?? html`<div class="badge ${n.icon}">${n.icon}</div>`}</div>
                <div class="txt">${n.text}</div>
                <div class="cog">${i < 9 ? cogs(15, 12) : ""}</div>
              </div>`)}
            </div>
            <div class="scroll"></div>
          </div>
        </aside>
      </div>`;
  }
}
